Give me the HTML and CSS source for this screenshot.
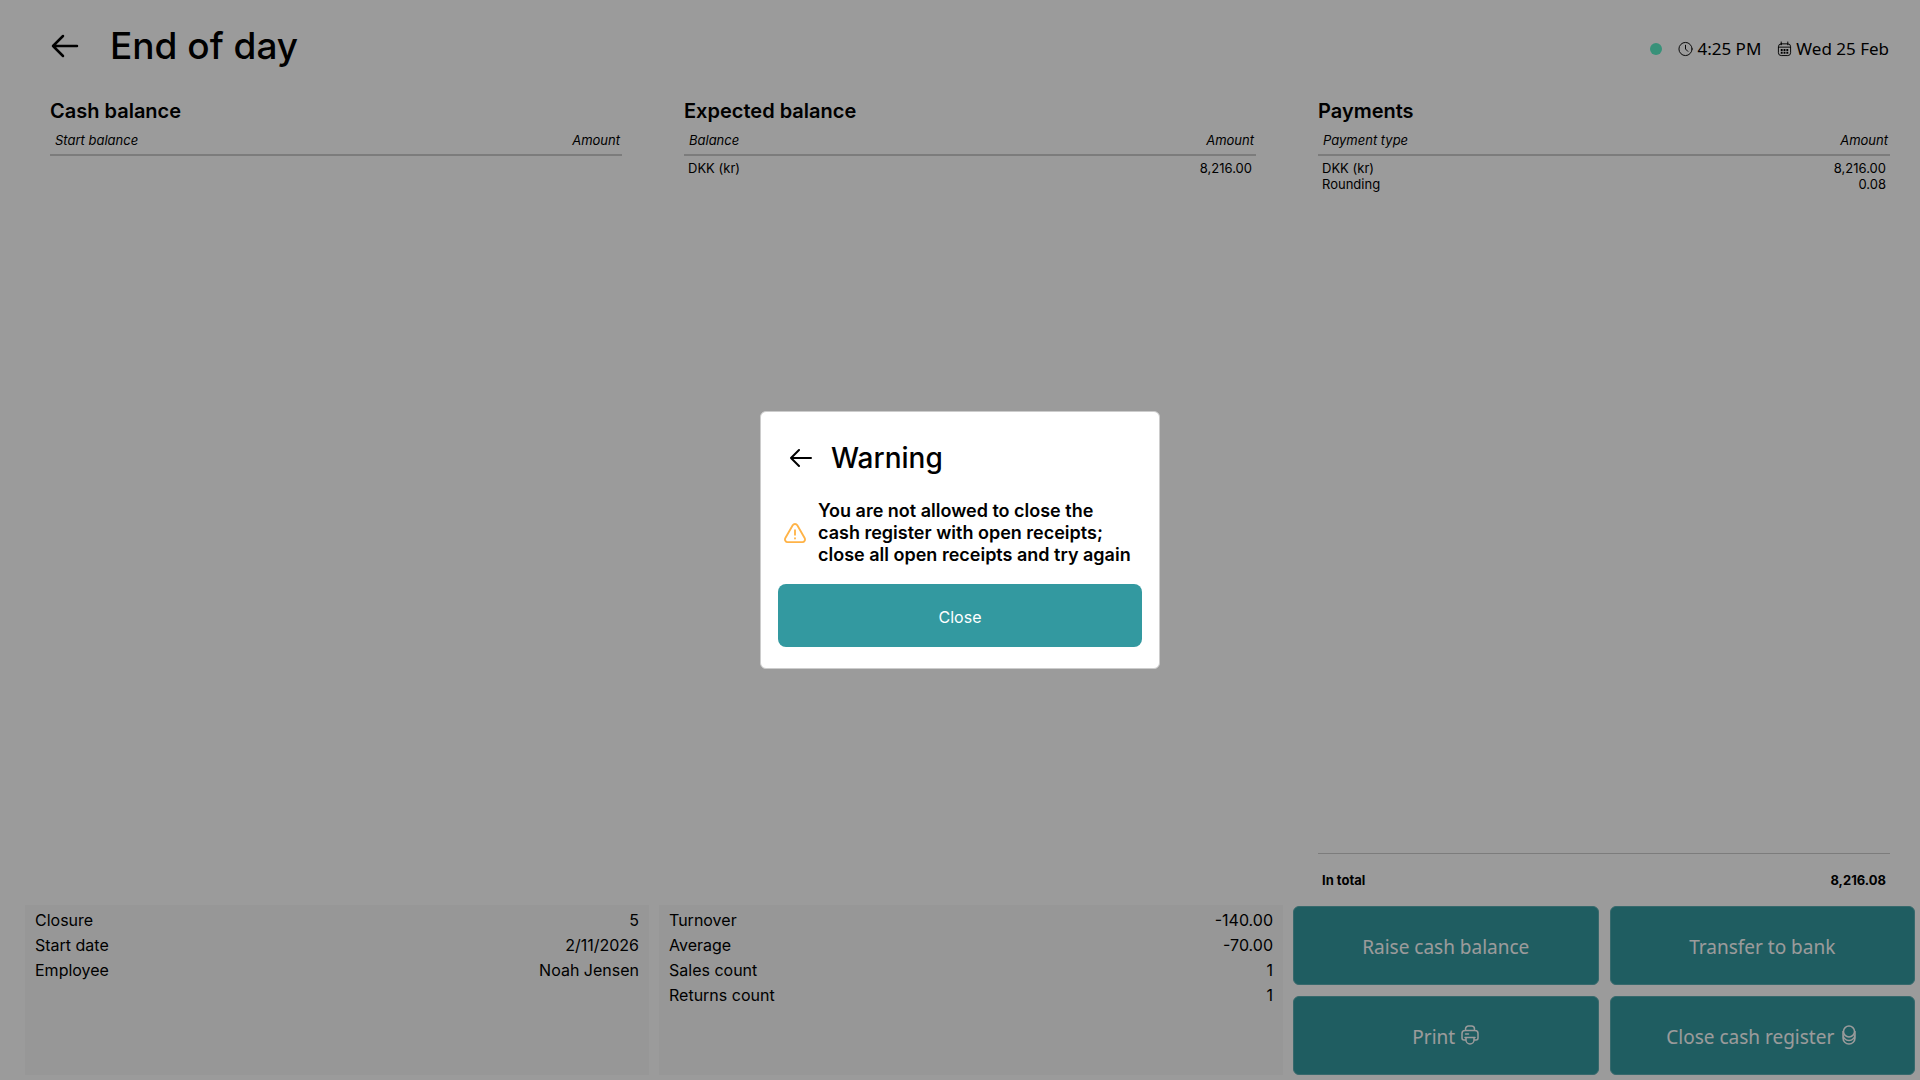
FILE: index.html
```
<!DOCTYPE html>
<html lang="en">
<head>
  <meta charset="UTF-8">
  <meta name="viewport" content="width=device-width, initial-scale=1.0">
  <title>End of day</title>
  <link rel="stylesheet" href="styles.css">
</head>
<body>
  <div class="page">
    <header class="topbar">
      <button class="back-btn" aria-label="Back">
        <svg viewBox="0 0 28 24"><path d="M26 12H2M12 2L2 12l10 10" /></svg>
      </button>
      <h1>End of day</h1>
      <div class="status">
        <span class="online-dot"></span>
        <span class="status-item">
          <svg viewBox="0 0 16 16"><circle cx="8" cy="8" r="7" /><path d="M8 4v4l2.500 2.500" /></svg>
          4:25 PM
        </span>
        <span class="status-item">
          <svg viewBox="0 0 16 16"><rect x="1.500" y="2.500" width="13" height="12.500" rx="3" /><path d="M1.500 6h13M4.500 0.500v3M11.500 0.500v3" /><path class="dots" d="M4 9h8M4 12h8" /></svg>
          Wed 25 Feb
        </span>
      </div>
    </header>

    <main class="columns">
      <section class="balance">
        <h2>Cash balance</h2>
        <table>
          <thead>
            <tr><th>Start balance</th><th>Amount</th></tr>
          </thead>
        </table>
      </section>

      <section class="balance">
        <h2>Expected balance</h2>
        <table>
          <thead>
            <tr><th>Balance</th><th>Amount</th></tr>
          </thead>
          <tbody>
            <tr><td>DKK (kr)</td><td>8,216.00</td></tr>
          </tbody>
        </table>
      </section>

      <section class="balance">
        <h2>Payments</h2>
        <table>
          <thead>
            <tr><th>Payment type</th><th>Amount</th></tr>
          </thead>
          <tbody>
            <tr><td>DKK (kr)</td><td>8,216.00</td></tr>
            <tr><td>Rounding</td><td>0.08</td></tr>
          </tbody>
        </table>
        <div class="total"><span>In total</span><span>8,216.08</span></div>
      </section>
    </main>

    <footer class="bottom">
      <dl class="summary">
        <div><dt>Closure</dt><dd>5</dd></div>
        <div><dt>Start date</dt><dd>2/11/2026</dd></div>
        <div><dt>Employee</dt><dd>Noah Jensen</dd></div>
      </dl>
      <dl class="summary">
        <div><dt>Turnover</dt><dd>-140.00</dd></div>
        <div><dt>Average</dt><dd>-70.00</dd></div>
        <div><dt>Sales count</dt><dd>1</dd></div>
        <div><dt>Returns count</dt><dd>1</dd></div>
      </dl>
      <div class="actions">
        <button class="btn">Raise cash balance</button>
        <button class="btn">Transfer to bank</button>
        <button class="btn">
          Print
          <svg viewBox="0 0 18 20"><path d="M4.500 5.500V4a3 3 0 0 1 3-3h3a3 3 0 0 1 3 3v1.500M4.500 15H3a2 2 0 0 1-2-2V8.500a3 3 0 0 1 3-3h10a3 3 0 0 1 3 3V13a2 2 0 0 1-2 2h-1.500M4 12.500h10M5 12.500V15a4 4 0 0 0 8 0v-2.500M4.500 9h3" /></svg>
        </button>
        <button class="btn">
          Close cash register
          <svg viewBox="0 0 18 20"><circle cx="9" cy="6.500" r="5.500" /><path d="M3 6.500V13a6 6 0 0 0 12 0V6.500M3 9.500a6 6 0 0 0 12 0" /></svg>
        </button>
      </div>
    </footer>
  </div>

  <!-- Warning dialog -->
  <div class="overlay">
    <div class="dialog" role="alertdialog" aria-labelledby="warning-title" aria-describedby="warning-text">
      <div class="dialog-head">
        <button class="back-btn" aria-label="Back">
          <svg viewBox="0 0 22 20"><path d="M21 10H1M9 2L1 10l8 8" /></svg>
        </button>
        <h2 id="warning-title">Warning</h2>
      </div>
      <div class="dialog-body">
        <svg viewBox="0 0 24 24"><path d="M9.500 3.500a3 3 0 0 1 5 0l8 14a3 3 0 0 1-2.500 4.500H4a3 3 0 0 1-2.500-4.500zM12 9v5M12 17.500v0.500" /></svg>
        <p id="warning-text">You are not allowed to close the cash register with open receipts; close all open receipts and try again</p>
      </div>
      <button class="btn close-btn">Close</button>
    </div>
  </div>
</body>
</html>
```
FILE: styles.css
```
* {
  box-sizing: border-box;
}
body {
  margin: 0;
  font-family: Inter, "Liberation Sans", sans-serif;
  font-size: 16px;
  color: #000;
  background-color: #fff;
}
h1, h2, p, dl, dd {
  margin: 0;
}
button {
  font-family: inherit;
  cursor: pointer;
}
svg {
  fill: none;
  stroke: currentColor;
  stroke-linecap: round;
  stroke-linejoin: round;
  flex-shrink: 0;
}
.page {
  display: flex;
  flex-direction: column;
  min-height: 100vh;
  padding: 0 3px 5px 25px;
}

/* Top bar */
.topbar {
  display: flex;
  align-items: center;
  height: 92px;
  padding: 0 28px 0 26px;
}
.back-btn {
  display: flex;
  padding: 0;
  border: none;
  background: none;
  color: inherit;
}
.back-btn svg {
  width: 28px;
  height: 24px;
  stroke-width: 2.500;
}
h1 {
  margin-left: 31px;
  font-size: 37px;
  font-weight: 500;
  line-height: 44px;
}
.status {
  display: flex;
  align-items: center;
  gap: 16px;
  margin-left: auto;
  padding-top: 6px;
  font-family: "Noto Sans", sans-serif;
  font-size: 17px;
  line-height: 24px;
}
.status-item {
  display: flex;
  align-items: center;
  gap: 4px;
}
.status svg {
  width: 15px;
  height: 16px;
}
.status .dots {
  stroke-width: 2;
  stroke-linecap: butt;
  stroke-dasharray: 2 1;
}
.online-dot {
  width: 12px;
  height: 12px;
  border-radius: 50%;
  background-color: #5cefc8;
}

/* Balance columns */
.columns, .bottom {
  display: grid;
  grid-template-columns: repeat(3, minmax(0, 1fr));
  gap: 10px;
}
.columns {
  flex: 1;
}
.balance {
  display: flex;
  flex-direction: column;
  padding: 6px 27px 0 25px;
}
.balance h2 {
  font-size: 20px;
  font-weight: 600;
  line-height: 26px;
}
table {
  width: 100%;
  border-collapse: collapse;
  font-size: 13px;
  line-height: 16px;
}
th {
  padding: 8px 2px 6px 5px;
  border-bottom: 2px solid #ccc;
  font-weight: 400;
  font-style: italic;
  text-align: left;
}
td {
  padding: 0 4px 0 4px;
}
th:last-child, td:last-child {
  text-align: right;
}
tbody tr:first-child td {
  padding-top: 4px;
}
.total {
  display: flex;
  justify-content: space-between;
  margin-top: auto;
  padding: 18px 4px 17px 4px;
  border-top: 1px solid #ccc;
  font-size: 13px;
  font-weight: 700;
  line-height: 16px;
}

/* Summary and buttons */
.summary {
  padding: 3px 10px;
  background-color: #f8f8f8;
  line-height: 25px;
}
.summary div {
  display: flex;
  justify-content: space-between;
}
.actions {
  display: grid;
  grid-template-columns: 1fr 1fr;
  gap: 11px;
  padding: 1px 2px 0 0;
}
.btn {
  display: flex;
  align-items: center;
  justify-content: center;
  gap: 6px;
  height: 79px;
  padding: 2px 6px 0;
  border: 1px solid #5badb2;
  border-radius: 6px;
  background-color: #3399a0;
  color: #fff;
  font-family: "Noto Sans", sans-serif;
  font-size: 19px;
}
.btn svg {
  width: 18px;
  height: 20px;
  margin-bottom: 4px;
  stroke-width: 1.500;
}

/* Warning */
.overlay {
  position: fixed;
  inset: 0;
  display: flex;
  align-items: center;
  justify-content: center;
  background-color: rgba(0, 0, 0, 0.392);
}
.dialog {
  width: 400px;
  padding: 29px 17px 21px;
  border: 1px solid #ccc;
  border-radius: 6px;
  background-color: #fff;
}
.dialog-head {
  display: flex;
  align-items: center;
  gap: 19px;
  padding-left: 12px;
}
.dialog-head svg {
  width: 22px;
  height: 20px;
  stroke-width: 2;
}
.dialog-head h2 {
  font-size: 28px;
  font-weight: 500;
  line-height: 34px;
}
.dialog-body {
  display: flex;
  align-items: center;
  gap: 12px;
  padding: 25px 4px 18px 6px;
  font-size: 18px;
  font-weight: 600;
  line-height: 22px;
}
.dialog-body svg {
  width: 22px;
  height: 22px;
  color: #ffb347;
  stroke-width: 2;
}
.close-btn {
  width: 100%;
  height: 63px;
  border: none;
  border-radius: 8px;
  font-family: inherit;
  font-size: 16px;
}
```
